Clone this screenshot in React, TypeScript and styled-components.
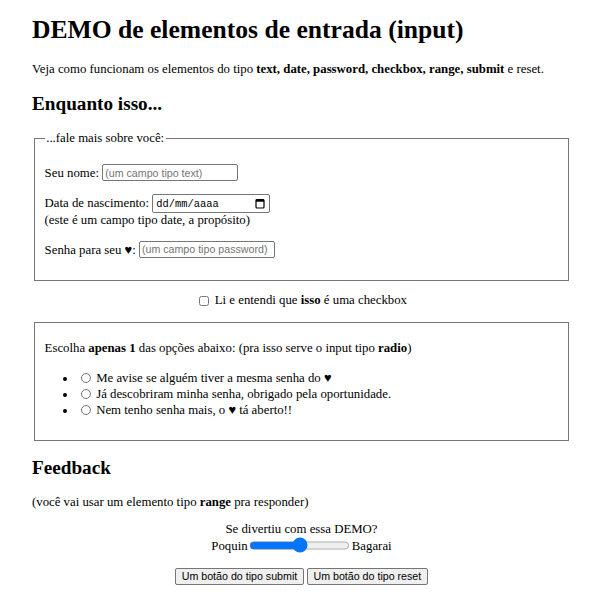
import React from 'react';
import styled, { createGlobalStyle } from 'styled-components';

const GlobalStyle = createGlobalStyle`
    body{
        margin:0;
        background:#ffffff;
        color:#000000;
        font-family:'Liberation Serif','Times New Roman',serif;
        font-size:12.8px;
    }
`;

const App: React.FC = () =>{
    return(
        <Page>
            <GlobalStyle />
            <Title>DEMO de elementos de entrada (input)</Title>
            <Text>
                Veja como funcionam os elementos do tipo <b>text, date, password, checkbox, range, submit</b> e reset.
            </Text>
            <SectionTitle>Enquanto isso...</SectionTitle>
            <Box>
                <Legend>...fale mais sobre você:</Legend>
                <Text>
                    Seu nome: <TextInput type="text" placeholder="(um campo tipo text)" />
                </Text>
                <Text>
                    Data de nascimento: <DateBox>
                        <span>dd/mm/aaaa</span>
                        <svg width="10" height="11" viewBox="0 0 10 11">
                            <rect x="1" y="1.5" width="8" height="8.5" rx="1" fill="none" stroke="#000" strokeWidth="1.2" />
                            <rect x="1" y="1.5" width="8" height="2.2" fill="#000" />
                        </svg>
                    </DateBox>
                    <br />
                    (este é um campo tipo date, a propósito)
                </Text>
                <Text>
                    Senha para seu ♥: <TextInput type="password" placeholder="(um campo tipo password)" />
                </Text>
            </Box>
            <Text center>
                <Check type="checkbox" /> Li e entendi que <b>isso</b> é uma checkbox
            </Text>
            <Box>
                <Text>
                    Escolha <b>apenas 1</b> das opções abaixo: (pra isso serve o input tipo <b>radio</b>)
                </Text>
                <OptionList>
                    <li><Radio type="radio" name="op" /> Me avise se alguém tiver a mesma senha do ♥</li>
                    <li><Radio type="radio" name="op" /> Já descobriram minha senha, obrigado pela oportunidade.</li>
                    <li><Radio type="radio" name="op" /> Nem tenho senha mais, o ♥ tá aberto!!</li>
                </OptionList>
            </Box>
            <SectionTitle>Feedback</SectionTitle>
            <Text>(você vai usar um elemento tipo <b>range</b> pra responder)</Text>
            <Text center>
                Se divertiu com essa DEMO?
                <br />
                Poquin<Range type="range" />Bagarai
            </Text>
            <Buttons>
                <Button type="submit">Um botão do tipo submit</Button> <Button type="reset">Um botão do tipo reset</Button>
            </Buttons>
        </Page>
    );
}

const Page = styled.div`
    padding:1px 29px 0px 32px;
`;

const Title = styled.h1`
    font-size:25.6px;
    font-weight:bold;
    margin:14px 0px 17px 0px;
`;

const SectionTitle = styled.h2`
    font-size:19.2px;
    font-weight:bold;
    margin:16px 0px;
`;

const Text = styled.p<{ center?: boolean }>`
    margin:12.8px 0px;
    text-align:${p => p.center ? 'center' : 'left'};
`;

const Box = styled.fieldset`
    margin:0px 2px;
    padding:5.5px 9.6px 9px 9.6px;
    border:1px solid #767676;
`;

const Legend = styled.legend`
    padding:0px 1.6px;
`;

const TextInput = styled.input`
    box-sizing:border-box;
    width:136px;
    height:17px;
    padding:1px 2px;
    border:1px solid #767676;
    border-radius:2px;
    font-family:'Liberation Sans',Arial,sans-serif;
    font-size:10.67px;
    vertical-align:baseline;
    &::placeholder{
        color:#757575;
    }
`;

const DateBox = styled.span`
    display:inline-flex;
    align-items:baseline;
    justify-content:space-between;
    box-sizing:border-box;
    width:118px;
    height:19px;
    padding:3px 4px 0px 3px;
    border:1px solid #767676;
    border-radius:2px;
    vertical-align:baseline;
    font-family:'Liberation Mono','Courier New',monospace;
    font-size:10.4px;
    &>svg{
        display:block;
        align-self:center;
        margin-top:-3px;
    }
`;

const Check = styled.input`
    width:10px;
    height:10px;
    margin:2.4px 2.4px 0px 3.2px;
    vertical-align:-1px;
`;

const OptionList = styled.ul`
    margin:13.8px 0px 12.8px 0px;
    padding-left:32px;
    &>li{
        line-height:16px;
    }
`;

const Radio = styled.input`
    width:10px;
    height:10px;
    margin:2.4px 2.4px 0px 4px;
    vertical-align:-1px;
`;

const Range = styled.input`
    width:101px;
    height:13px;
    margin:1.6px;
    vertical-align:-2px;
`;

const Buttons = styled.div`
    margin-top:14px;
    text-align:center;
`;

const Button = styled.button`
    font-family:'Liberation Sans',Arial,sans-serif;
    font-size:10.67px;
    height:17px;
    padding:0px 5.5px;
    background-color:#efefef;
    border:1px solid #767676;
    border-radius:2px;
    color:#000000;
`;

export default App;
